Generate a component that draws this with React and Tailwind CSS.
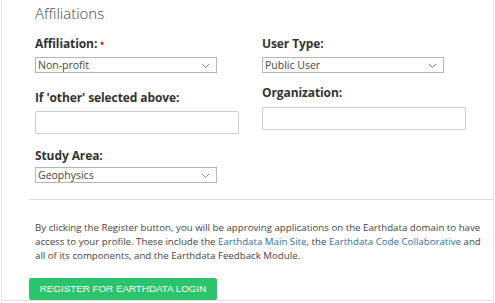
import React from 'react';

function Chevron() {
  return (
    <svg width="9" height="6" viewBox="0 0 9 6" className="absolute right-[6px] top-[5px]">
      <path d="M1 1l3.5 3.5L8 1" fill="none" stroke="#888" strokeWidth="1" />
    </svg>
  );
}

function Select({ value, width }) {
  return (
    <div className={`relative ${width} h-[16px] border border-[#b5b5b5] bg-white text-[10.5px] leading-[14px] pl-[2px] text-[#444]`}>
      {value}
      <Chevron />
    </div>
  );
}

function Label({ children, className = '' }) {
  return (
    <div className={`text-[12px] leading-[17px] font-bold tracking-[-0.1px] text-[#333] ${className}`}>{children}</div>
  );
}

export default function App() {
  return (
    <div className="w-[495px] h-[303px] bg-white font-['Open_Sans',sans-serif]">
      <div className="ml-[1px] w-[493px] h-[301px] border-x border-b border-[#e3e3e3]">
        <div className="pl-[33px] pt-[3px]">
          <h3 className="text-[15px] leading-[20px] font-light text-[#444]">Affiliations</h3>
          <div className="flex mt-[12px]">
            {/* left column */}
            <div className="w-[227px]">
              <Label>
                Affiliation: <span className="text-[#c0392b] text-[10px] align-top">•</span>
              </Label>
              <div className="mt-[5px]">
                <Select value="Non-profit" width="w-[182px]" />
              </div>
              <Label className="mt-[16px]">If 'other' selected above:</Label>
              <div className="mt-[5px] w-[204px] h-[23px] border border-[#ccc] rounded-[2px]" />
              <Label className="mt-[13px]">Study Area:</Label>
              <div className="mt-[3px]">
                <Select value="Geophysics" width="w-[182px]" />
              </div>
            </div>
            {/* right column */}
            <div>
              <Label>User Type:</Label>
              <div className="mt-[5px]">
                <Select value="Public User" width="w-[182px]" />
              </div>
              <Label className="mt-[11px]">Organization:</Label>
              <div className="mt-[6px] w-[204px] h-[23px] border border-[#ccc] rounded-[2px]" />
            </div>
          </div>
        </div>
        <div className="ml-[27px] mt-[16px] border-t border-[#ddd]" />
        <p className="pl-[33px] pr-[8px] mt-[21px] text-[9.7px] leading-[14px] text-[#444]">
          By clicking the Register button, you will be approving applications on the Earthdata domain to have
          access to your profile. These include the{' '}
          <span className="text-[#2f6ea5]">Earthdata Main Site</span>, the{' '}
          <span className="text-[#2f6ea5]">Earthdata Code Collaborative</span> and all of its components, and the Earthdata Feedback Module.
        </p>
        <div className="pl-[27px] mt-[11px]">
          <button className="w-[188px] h-[22px] bg-[#2bc46c] rounded-[2px] text-white text-[9.8px] whitespace-nowrap font-['Liberation_Sans',Arial,sans-serif]">
            REGISTER FOR EARTHDATA LOGIN
          </button>
        </div>
      </div>
    </div>
  );
}
